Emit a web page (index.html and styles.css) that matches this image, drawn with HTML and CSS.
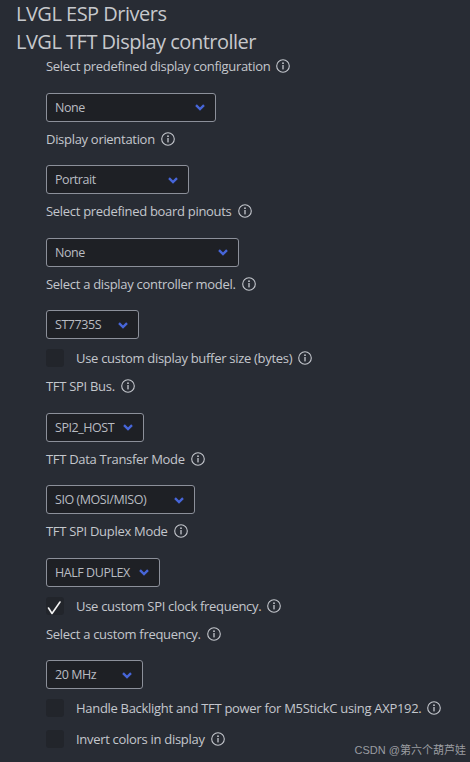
FILE: index.html
```html
<!DOCTYPE html>
<html lang="en">
<head>
<meta charset="utf-8">
<title>LVGL TFT Display controller</title>
<link rel="stylesheet" href="styles.css">
</head>
<body>
<main class="panel">
  <h1 class="title">LVGL ESP Drivers</h1>
  <h2 class="title">LVGL TFT Display controller</h2>
  <div class="form">
    <div class="label">Select predefined display configuration <svg class="info" viewBox="0 0 14 14"><circle cx="7" cy="7" r="6.3"/><circle class="dot" cx="7" cy="4.2" r="0.9"/><rect class="stem" x="6.35" y="6" width="1.3" height="4.4"/></svg></div>
    <div class="select w-config"><span>None</span><svg class="chev" viewBox="0 0 10 7"><polyline points="1,1.2 5,5 9,1.2"/></svg></div>

    <div class="label">Display orientation <svg class="info" viewBox="0 0 14 14"><circle cx="7" cy="7" r="6.3"/><circle class="dot" cx="7" cy="4.2" r="0.9"/><rect class="stem" x="6.35" y="6" width="1.3" height="4.4"/></svg></div>
    <div class="select w-orient"><span>Portrait</span><svg class="chev" viewBox="0 0 10 7"><polyline points="1,1.2 5,5 9,1.2"/></svg></div>

    <div class="label">Select predefined board pinouts <svg class="info" viewBox="0 0 14 14"><circle cx="7" cy="7" r="6.3"/><circle class="dot" cx="7" cy="4.2" r="0.9"/><rect class="stem" x="6.35" y="6" width="1.3" height="4.4"/></svg></div>
    <div class="select w-board"><span>None</span><svg class="chev" viewBox="0 0 10 7"><polyline points="1,1.2 5,5 9,1.2"/></svg></div>

    <div class="label">Select a display controller model. <svg class="info" viewBox="0 0 14 14"><circle cx="7" cy="7" r="6.3"/><circle class="dot" cx="7" cy="4.2" r="0.9"/><rect class="stem" x="6.35" y="6" width="1.3" height="4.4"/></svg></div>
    <div class="select w-model"><span>ST7735S</span><svg class="chev" viewBox="0 0 10 7"><polyline points="1,1.2 5,5 9,1.2"/></svg></div>

    <div class="check"><span class="box"></span><span class="check-text">Use custom display buffer size (bytes)</span><svg class="info" viewBox="0 0 14 14"><circle cx="7" cy="7" r="6.3"/><circle class="dot" cx="7" cy="4.2" r="0.9"/><rect class="stem" x="6.35" y="6" width="1.3" height="4.4"/></svg></div>

    <div class="label">TFT SPI Bus. <svg class="info" viewBox="0 0 14 14"><circle cx="7" cy="7" r="6.3"/><circle class="dot" cx="7" cy="4.2" r="0.9"/><rect class="stem" x="6.35" y="6" width="1.3" height="4.4"/></svg></div>
    <div class="select w-bus"><span>SPI2_HOST</span><svg class="chev" viewBox="0 0 10 7"><polyline points="1,1.2 5,5 9,1.2"/></svg></div>

    <div class="label">TFT Data Transfer Mode <svg class="info" viewBox="0 0 14 14"><circle cx="7" cy="7" r="6.3"/><circle class="dot" cx="7" cy="4.2" r="0.9"/><rect class="stem" x="6.35" y="6" width="1.3" height="4.4"/></svg></div>
    <div class="select w-mode"><span>SIO (MOSI/MISO)</span><svg class="chev" viewBox="0 0 10 7"><polyline points="1,1.2 5,5 9,1.2"/></svg></div>

    <div class="label">TFT SPI Duplex Mode <svg class="info" viewBox="0 0 14 14"><circle cx="7" cy="7" r="6.3"/><circle class="dot" cx="7" cy="4.2" r="0.9"/><rect class="stem" x="6.35" y="6" width="1.3" height="4.4"/></svg></div>
    <div class="select w-duplex"><span>HALF DUPLEX</span><svg class="chev" viewBox="0 0 10 7"><polyline points="1,1.2 5,5 9,1.2"/></svg></div>

    <div class="check"><span class="box checked"><svg class="tick" viewBox="0 0 18 18"><polyline points="2.5,11 6,16.5 14,5"/></svg></span><span class="check-text">Use custom SPI clock frequency.</span><svg class="info" viewBox="0 0 14 14"><circle cx="7" cy="7" r="6.3"/><circle class="dot" cx="7" cy="4.2" r="0.9"/><rect class="stem" x="6.35" y="6" width="1.3" height="4.4"/></svg></div>

    <div class="label">Select a custom frequency. <svg class="info" viewBox="0 0 14 14"><circle cx="7" cy="7" r="6.3"/><circle class="dot" cx="7" cy="4.2" r="0.9"/><rect class="stem" x="6.35" y="6" width="1.3" height="4.4"/></svg></div>
    <div class="select w-freq"><span>20 MHz</span><svg class="chev" viewBox="0 0 10 7"><polyline points="1,1.2 5,5 9,1.2"/></svg></div>

    <div class="check"><span class="box"></span><span class="check-text">Handle Backlight and TFT power for M5StickC using AXP192.</span><svg class="info" viewBox="0 0 14 14"><circle cx="7" cy="7" r="6.3"/><circle class="dot" cx="7" cy="4.2" r="0.9"/><rect class="stem" x="6.35" y="6" width="1.3" height="4.4"/></svg></div>

    <div class="check"><span class="box"></span><span class="check-text">Invert colors in display</span><svg class="info" viewBox="0 0 14 14"><circle cx="7" cy="7" r="6.3"/><circle class="dot" cx="7" cy="4.2" r="0.9"/><rect class="stem" x="6.35" y="6" width="1.3" height="4.4"/></svg></div>
  </div>
</main>
<div class="watermark">CSDN @第六个葫芦娃</div>
</body>
</html>
```
FILE: styles.css
```css
html, body {
  margin: 0;
  padding: 0;
}
body {
  background: #282c34;
  color: #c4c7cd;
  font-family: "Open Sans", "Noto Sans", sans-serif;
  font-size: 13px;
  letter-spacing: -0.3px;
  height: 762px;
  overflow: hidden;
  position: relative;
}
.panel {
  padding: 0 0 0 16px;
  display: flex;
  flex-direction: column;
}
.title {
  margin: 0;
  font-size: 20px;
  font-weight: 400;
  letter-spacing: -0.5px;
  line-height: 28px;
  color: #c6c8cc;
}
.form {
  display: flex;
  flex-direction: column;
  align-items: flex-start;
  padding-left: 30px;
}
.label {
  display: flex;
  align-items: center;
  gap: 6px;
  height: 20px;
  line-height: 20px;
  white-space: nowrap;
}
.info {
  width: 14px;
  height: 14px;
  flex: none;
}
.info circle {
  fill: none;
  stroke: #c4c7cd;
  stroke-width: 1.1;
}
.info .dot {
  fill: #c4c7cd;
  stroke: none;
}
.info .stem {
  fill: #c4c7cd;
}
.select {
  box-sizing: border-box;
  height: 29px;
  border: 1px solid #8c909a;
  border-radius: 3px;
  background: #1e2025;
  display: flex;
  align-items: center;
  justify-content: space-between;
  padding: 0 10px 0 8px;
  color: #b9bcc2;
  white-space: nowrap;
}
.select span {
  font-size: 12.5px;
  letter-spacing: -0.45px;
}
.chev {
  width: 10px;
  height: 7px;
  flex: none;
  margin-top: 1px;
}
.chev polyline {
  fill: none;
  stroke: #4766d9;
  stroke-width: 2.4;
}
.w-config { width: 170px; }
.w-orient { width: 143px; }
.w-board { width: 193px; }
.w-model { width: 93px; }
.w-bus { width: 98px; }
.w-mode { width: 149px; }
.w-duplex { width: 114px; }
.w-freq { width: 97px; }

.check {
  display: flex;
  align-items: center;
  height: 18px;
  white-space: nowrap;
}
.box {
  width: 18px;
  height: 18px;
  border-radius: 3px;
  background: #22252b;
  margin-right: 12px;
  flex: none;
  position: relative;
}
.tick {
  width: 18px;
  height: 18px;
  display: block;
}
.tick polyline {
  fill: none;
  stroke: #f2f2f2;
  stroke-width: 1.6;
  stroke-linecap: round;
  stroke-linejoin: round;
}
.check-text {
  margin-right: 6px;
}

.label + .select { margin-top: 16.5px; }
.select + .label { margin-top: 7px; }
.select + .check { margin-top: 10px; }
.check + .label { margin-top: 9px; }
.check + .check { margin-top: 13px; }

.watermark {
  position: absolute;
  right: 4px;
  bottom: 5px;
  font-family: "Liberation Sans", "Noto Sans CJK SC", sans-serif;
  font-size: 11px;
  letter-spacing: 0;
  color: #9a9ca1;
}
```
